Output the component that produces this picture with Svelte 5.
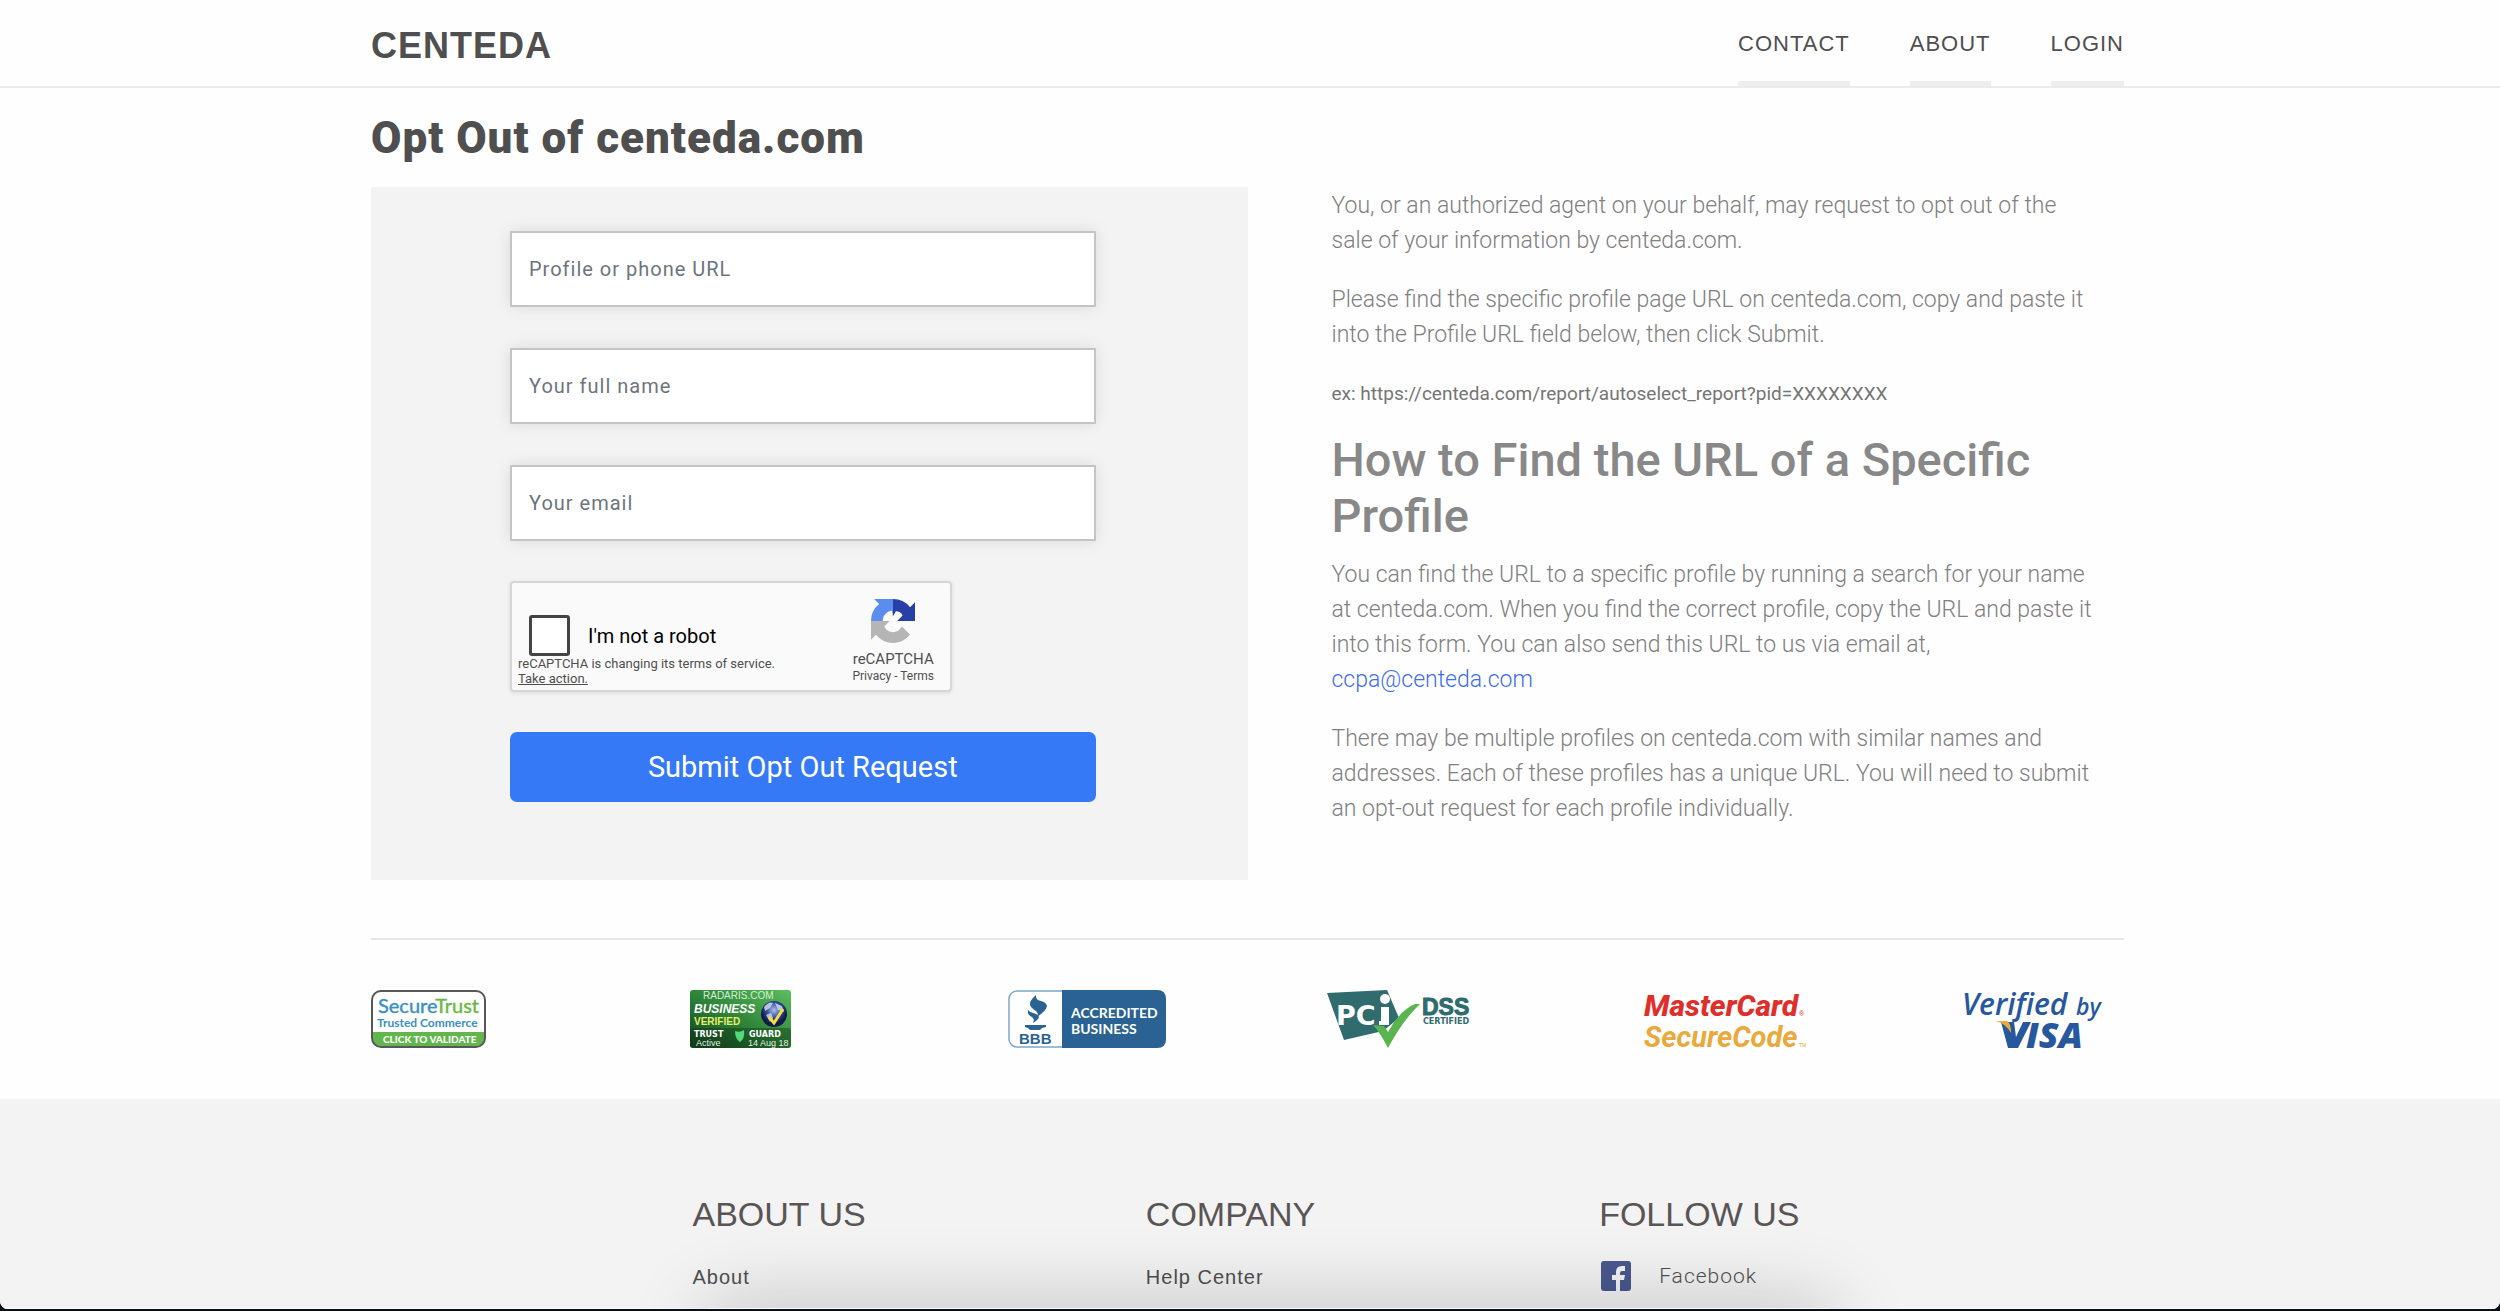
<script>
  const navLinks = ['Contact', 'About', 'Login'];

  const fields = [
    { id: 'profile', type: 'text', label: 'Profile or phone URL' },
    { id: 'name', type: 'text', label: 'Your full name' },
    { id: 'email', type: 'email', label: 'Your email' }
  ];

  const footerColumns = [
    { title: 'About us', link: 'About' },
    { title: 'Company', link: 'Help Center' }
  ];
</script>

<div class="page">
  <header class="header">
    <div class="container header-inner">
      <a class="brand" href="#home">CENTEDA</a>
      <nav class="nav">
        {#each navLinks as link}
          <a href="#{link.toLowerCase()}">{link}</a>
        {/each}
      </nav>
    </div>
  </header>

  <main class="container">
    <h1>Opt Out of centeda.com</h1>

    <div class="columns">
      <form class="panel" on:submit|preventDefault>
        <div class="fields">
          {#each fields as field}
            <input class="field" id={field.id} type={field.type} placeholder={field.label} aria-label={field.label} />
          {/each}
        </div>

        <div class="captcha">
          <div class="captcha-main">
            <div class="captcha-check">
              <input id="robot" type="checkbox" />
              <label for="robot">I'm not a robot</label>
            </div>
            <p class="captcha-note">
              reCAPTCHA is changing its terms of service.<br />
              <a href="#terms">Take action.</a>
            </p>
          </div>
          <div class="captcha-brand">
            <svg viewBox="0 0 64 64" class="captcha-logo" aria-hidden="true">
              <path fill="#283fa5" d="M64 32V4.700l-7.200 7.200A31.900 31.900 0 0 0 32 0v25l4-7a11.200 11.200 0 0 1 10 6L38 32z" />
              <path fill="#5b8def" d="M32 0H4.600l7.200 7.200A31.900 31.900 0 0 0 0 32h17a15.700 15.700 0 0 1 7.500-13c1.400-1.100 3.400-2 6.100-2L32 26z" />
              <path fill="#b5b5b5" d="M0 32v27.300l7.200-7.200A31.900 31.900 0 0 0 32 64c10.500 0 18.600-4.500 24.600-12.200L44.900 40.100a15.600 15.600 0 0 1-4.700 5.300c-2 1.500-4.800 2.800-8.700 2.800-7-.4-11.600-5.200-11.900-8.500L27 32z" />
            </svg>
            <span class="captcha-name">reCAPTCHA</span>
            <span class="captcha-links"><a href="#privacy">Privacy</a> - <a href="#terms">Terms</a></span>
          </div>
        </div>

        <button class="submit" type="submit">Submit Opt Out Request</button>
      </form>

      <section class="info">
        <p>
          You, or an authorized agent on your behalf, may request to opt out of the sale of your information by
          centeda.com.
        </p>
        <p>
          Please find the specific profile page URL on centeda.com, copy and paste it into the Profile URL field below,
          then click Submit.
        </p>
        <p class="example">ex: https://centeda.com/report/autoselect_report?pid=XXXXXXXX</p>
        <h2>How to Find the URL of a Specific Profile</h2>
        <p>
          You can find the URL to a specific profile by running a search for your name at centeda.com. When you find the
          correct profile, copy the URL and paste it into this form. You can also send this URL to us via email at,
          <a href="mailto:ccpa@centeda.com">ccpa@centeda.com</a>
        </p>
        <p>
          There may be multiple profiles on centeda.com with similar names and addresses. Each of these profiles has a
          unique URL. You will need to submit an opt-out request for each profile individually.
        </p>
      </section>
    </div>

    <div class="badges">
      <svg viewBox="0 0 115 58" width="115" height="58" role="img" aria-label="SecureTrust">
        <rect x="1" y="1" width="113" height="56" rx="9" fill="#fff" />
        <path d="M2 42H113V49Q113 56 106 56H9Q2 56 2 49Z" fill="#62b64c" />
        <rect x="1" y="1" width="113" height="56" rx="9" fill="none" stroke="#555759" stroke-width="2" />
        <text x="7" y="23" font-family="Lato" font-size="20" fill="#3b8fc4" stroke="#3b8fc4" stroke-width=".4">Secure<tspan fill="#6bb845" stroke="#6bb845">Trust</tspan></text>
        <text x="6" y="37" font-family="Lato" font-size="12" font-weight="700" fill="#3b8fc4">Trusted Commerce</text>
        <text x="12" y="53" font-family="Lato" font-size="10" font-weight="900" fill="#fff">CLICK TO VALIDATE</text>
      </svg>

      <svg viewBox="0 0 101 58" width="101" height="58" role="img" aria-label="Trust Guard business verified">
        <defs>
          <linearGradient id="guard" x1="1" y1="0" x2="0" y2="1">
            <stop offset="0" stop-color="#5cbd5f" />
            <stop offset=".55" stop-color="#2b8137" />
            <stop offset="1" stop-color="#123d1c" />
          </linearGradient>
          <radialGradient id="globe" cx=".5" cy=".35">
            <stop offset="0" stop-color="#a9c3ea" />
            <stop offset=".6" stop-color="#30459b" />
            <stop offset="1" stop-color="#101b46" />
          </radialGradient>
        </defs>
        <rect width="101" height="58" rx="3" fill="url(#guard)" />
        <rect y="38" width="101" height="20" rx="3" fill="#0e3317" opacity=".4" />
        <text x="13" y="9" font-family="Liberation Sans" font-size="10" fill="#d6efd2">RADARIS.COM</text>
        <text x="4" y="23" font-family="Liberation Sans" font-size="12" font-weight="700" font-style="italic" fill="#fff">BUSINESS</text>
        <text x="4" y="35" font-family="Liberation Sans" font-size="10" font-weight="700" fill="#e9ee6b">VERIFIED</text>
        <circle cx="84" cy="24" r="13" fill="url(#globe)" />
        <path d="M74 17q5-6 9-4l-3 5-5 3zM85 13l7 3 2 6-6-2zM76 25l5-2 2 5-3 4z" fill="#d3e0ee" opacity=".8" />
        <path d="M79 27l5 6 9-14" fill="none" stroke="#f4dc45" stroke-width="3" />
        <text x="4" y="47" font-family="DejaVu Sans" font-size="8" font-weight="700" fill="#fff">TRUST</text>
        <text x="59" y="47" font-family="DejaVu Sans" font-size="8" font-weight="700" fill="#fff">GUARD</text>
        <path d="M45 41q5 2 9-1 1 9-4 12-5-3-5-11z" fill="#56d879" />
        <text x="6" y="56" font-family="Liberation Sans" font-size="9" fill="#e2f0e0">Active</text>
        <text x="58" y="56" font-family="Liberation Sans" font-size="9" fill="#e2f0e0">14 Aug 18</text>
      </svg>

      <svg viewBox="0 0 158 58" width="158" height="58" role="img" aria-label="BBB accredited business">
        <rect x="1" y="1" width="156" height="56" rx="8" fill="#fff" stroke="#7ba7cb" stroke-width="1.5" />
        <path d="M54 0H149Q158 0 158 9V49Q158 58 149 58H54Z" fill="#2a6293" />
        <path d="M28 5q-7 6-6 10 1 3 6 6 3 3 1 6 9-6 10-11-1-4-6-5-6-1-5-6z" fill="#2a6293" />
        <path d="M20 20q-1 5 4 7 3 2 1 6 6-4 6-6-1-3-6-4-4-1-5-3z" fill="#2a6293" />
        <path d="M17 35H38V37L34 38L32 40H22L20 38L17 37Z" fill="#2a6293" />
        <text x="11" y="54" font-family="Liberation Sans" font-size="15" font-weight="700" fill="#2a6293">BBB</text>
        <text x="63" y="28" font-family="Lato" font-size="14" font-weight="700" fill="#fff">ACCREDITED</text>
        <text x="63" y="44" font-family="Lato" font-size="14" font-weight="700" fill="#fff">BUSINESS</text>
      </svg>

      <svg viewBox="0 0 145 58" width="145" height="58" role="img" aria-label="PCI DSS certified">
        <path d="M0 3L60 0L72 28L56 41L17 50Z" fill="#306b6e" />
        <text x="9" y="35" font-family="DejaVu Sans" font-size="27" font-weight="700" fill="#fff">PC</text>
        <path d="M54 17H62V35H52V31H54Z" fill="#fff" />
        <circle cx="58" cy="9" r="5" fill="#fff" />
        <path d="M46 35L57 36L61 42Q73 20 88 14H93Q76 30 61 58Q54 44 46 35Z" fill="#5ab450" />
        <text x="95" y="25" font-family="Liberation Sans" font-size="23" font-weight="700" fill="#306b6e" stroke="#306b6e">DSS</text>
        <text x="96" y="34" font-family="DejaVu Sans" font-size="8" font-weight="700" fill="#306b6e">CERTIFIED</text>
      </svg>

      <svg viewBox="0 0 162 60" width="162" height="60" role="img" aria-label="MasterCard SecureCode">
        <text x="-2" y="26" font-family="Roboto" font-size="30" font-weight="800" font-style="italic" fill="#e02f2a">MasterCard</text>
        <text x="-2" y="57" font-family="Roboto" font-size="29" font-weight="700" font-style="italic" fill="#e9a93d">SecureCode</text>
        <text x="153" y="26" font-family="Liberation Sans" font-size="7" fill="#e02f2a">®</text>
        <text x="153" y="57" font-family="Liberation Sans" font-size="5" fill="#e9a93d">TM</text>
      </svg>

      <svg viewBox="0 0 140 60" width="140" height="60" role="img" aria-label="Verified by Visa">
        <text x="-3" y="25" font-family="Open Sans" font-size="30" font-weight="600" font-style="italic" fill="#27589d">Verified</text>
        <text x="111" y="25" font-family="Open Sans" font-size="23" font-weight="600" font-style="italic" fill="#27589d">by</text>
        <path d="M36 32H49L51 47L58 32H66L53 58H43Z" fill="#27589d" />
        <path d="M31 31H42Q46 33 46 43Q40 33 31 31Z" fill="#e9a93d" />
        <text x="61" y="58" font-family="Open Sans" font-size="36" font-weight="800" font-style="italic" fill="#27589d">ISA</text>
      </svg>
    </div>
  </main>

  <footer class="footer">
    <div class="footer-inner">
      {#each footerColumns as column}
        <div>
          <h3>{column.title}</h3>
          <a class="footer-link" href="#{column.link}">{column.link}</a>
        </div>
      {/each}
      <div>
        <h3>Follow us</h3>
        <a class="footer-social" href="#facebook">
          <svg viewBox="0 0 30 30" width="30" height="30" aria-hidden="true">
            <rect width="30" height="30" rx="3" fill="#4a588f" />
            <path d="M15 30V19H11V14H15V11Q15 5 21 5H24V10H21Q19 10 19 12V14H24L23 19H19V30Z" fill="#f3f3f3" />
          </svg>
          Facebook
        </a>
      </div>
    </div>
    <div class="footer-shade"></div>
  </footer>
</div>

<style>
  :global(body) {
    background: #0a0f16;
  }

  .page {
    display: flex;
    flex-direction: column;
    min-height: calc(100vh - 2px);
    overflow: hidden;
    border-radius: 0 0 8px 8px;
    background: #fefefe;
    color: #4f4f4f;
    font-family: Roboto, 'Liberation Sans', sans-serif;
  }

  .page * {
    box-sizing: border-box;
  }

  a {
    color: inherit;
    text-decoration: none;
  }

  .container {
    min-width: 1200px;
    margin: 0 15.04% 0 14.84%;
  }

  .header {
    border-bottom: 2px solid #ececec;
  }

  .header-inner {
    display: flex;
    justify-content: space-between;
    height: 86px;
    font-family: 'Liberation Sans', Arial, sans-serif;
  }

  .brand {
    font-size: 36px;
    font-weight: 700;
    line-height: 92px;
    letter-spacing: 1px;
  }

  .nav {
    display: flex;
    gap: 60px;
  }

  .nav a {
    border-bottom: 5px solid #eee;
    font-size: 22px;
    line-height: 88px;
    letter-spacing: 1px;
    text-transform: uppercase;
  }

  h1 {
    margin: 22px 0 21px;
    font-size: 44px;
    font-weight: 900;
    line-height: 56px;
    letter-spacing: 1px;
  }

  .columns {
    display: grid;
    grid-template-columns: 1fr 1fr;
    padding-bottom: 58px;
    border-bottom: 2px solid #e6e6e6;
  }

  .panel {
    display: flex;
    flex-direction: column;
    gap: 40px;
    padding: 44px 152px 78px 139px;
    background: #f3f3f3;
  }

  .fields {
    display: grid;
    gap: 41px;
  }

  .field {
    height: 76px;
    padding: 0 17px;
    border: 2px solid #c4c4c4;
    border-radius: 1px;
    background: #fff;
    box-shadow: 0 0 16px rgba(0, 0, 0, 0.1);
    color: #4f4f4f;
    font-family: Roboto, sans-serif;
    font-size: 20px;
    letter-spacing: 1px;
  }

  .field::placeholder {
    color: #6c757d;
    opacity: 1;
  }

  .captcha {
    display: flex;
    justify-content: space-between;
    width: 442px;
    height: 111px;
    padding: 0 16px 0 6px;
    border: 2px solid #d6d6d6;
    border-radius: 4px;
    background: #fafafa;
    box-shadow: 0 1px 4px rgba(0, 0, 0, 0.1);
  }

  .captcha-main {
    padding-top: 32px;
  }

  .captcha-check {
    display: flex;
    align-items: center;
    gap: 18px;
    padding-left: 11px;
    color: #000;
    font-size: 20px;
  }

  .captcha-check input {
    appearance: none;
    width: 41px;
    height: 41px;
    margin: 0;
    border: 3px solid #444;
    border-radius: 3px;
    background: #fff;
  }

  .captcha-note {
    margin: 0;
    font-size: 13px;
    line-height: 15px;
  }

  .captcha-note a {
    text-decoration: underline;
  }

  .captcha-brand {
    display: flex;
    flex-direction: column;
    align-items: center;
    padding-top: 16px;
  }

  .captcha-logo {
    width: 44px;
    height: 44px;
    margin-bottom: 6px;
  }

  .captcha-name {
    font-size: 15px;
    line-height: 20px;
  }

  .captcha-links {
    font-size: 12px;
    line-height: 15px;
  }

  .submit {
    height: 70px;
    border: 0;
    border-radius: 7px;
    background: #3579f6;
    color: #fff;
    font-family: Roboto, sans-serif;
    font-size: 29px;
  }

  .info {
    padding: 1px 26px 0 84px;
    color: #808080;
    font-size: 23px;
    font-weight: 300;
    line-height: 35px;
  }

  .info p {
    margin: 0 0 24px;
  }

  .info .example {
    margin-bottom: 21px;
    color: #757575;
    font-size: 19px;
    font-weight: 400;
  }

  .info h2 {
    margin: 0 0 13px;
    color: #888;
    font-size: 47px;
    font-weight: 500;
    line-height: 56px;
  }

  .info p a {
    color: #3f6df0;
  }

  .badges {
    display: grid;
    grid-template-columns: repeat(5, 2fr) 1fr;
    padding: 50px 0 49px;
  }

  .badges svg {
    overflow: visible;
  }

  .footer {
    position: relative;
    flex: 1;
    border-bottom: 1px solid #fff;
    background: #f3f3f3;
  }

  .footer-inner {
    display: grid;
    grid-template-columns: repeat(3, 1fr);
    width: 54.4%;
    margin-left: 27.7%;
    padding-top: 94px;
  }

  .footer h3 {
    margin: 0 0 25px;
    color: #5a5555;
    font-family: 'Liberation Sans', Arial, sans-serif;
    font-size: 34px;
    font-weight: 400;
    line-height: 42px;
    text-transform: uppercase;
  }

  .footer-link {
    font-family: 'Liberation Sans', Arial, sans-serif;
    font-size: 20px;
    line-height: 34px;
    letter-spacing: 1px;
  }

  .footer-social {
    display: flex;
    align-items: center;
    gap: 28px;
    margin-left: 2px;
    font-size: 21px;
    font-weight: 300;
    line-height: 32px;
    letter-spacing: 1px;
  }

  .footer-shade {
    position: absolute;
    top: 100%;
    right: 26.8%;
    left: 28.3%;
    height: 60px;
    box-shadow: 0 0 80px rgba(0, 0, 0, 0.24);
    pointer-events: none;
  }
</style>
